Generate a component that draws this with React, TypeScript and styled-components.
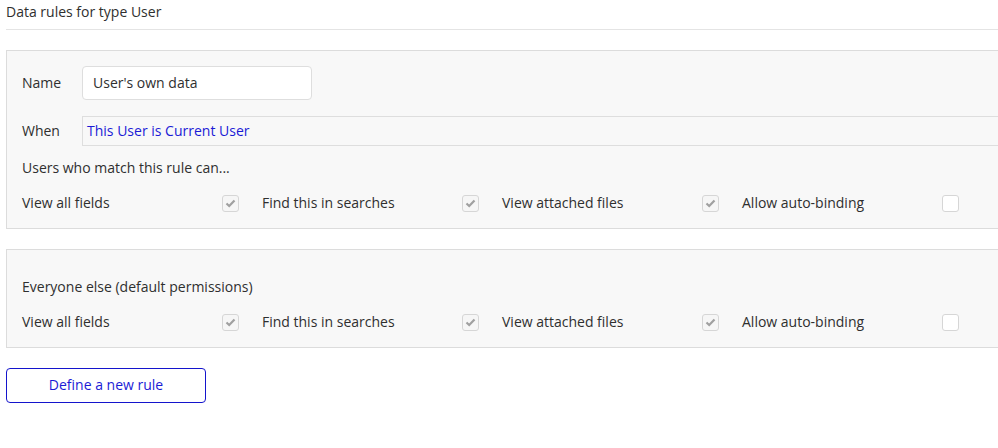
import React from "react";
import styled, { createGlobalStyle } from "styled-components";

const Global = createGlobalStyle`
  html, body { margin: 0; padding: 0; background: #fff; }
  body { font-family: "Open Sans", "Noto Sans", sans-serif; color: #2f2f2f; }
  * { box-sizing: border-box; }
`;

const Page = styled.div`
  padding: 0 0 0 6px;
  width: 998px;
`;

const Title = styled.div`
  font-size: 14px;
  line-height: 20px;
  padding-top: 2px;
  height: 30px;
  border-bottom: 1px solid #e4e4e4;
`;

const Panel = styled.div<{ $top: number }>`
  margin-top: ${(p) => p.$top}px;
  background: #f8f8f8;
  border: 1px solid #dcdcdc;
  border-right: none;
  padding: 0 0 0 15px;
`;

const Row = styled.div<{ $h: number }>`
  display: flex;
  align-items: center;
  height: ${(p) => p.$h}px;
  font-size: 14px;
`;

const TextRow = styled(Row)`
  padding-bottom: 2px;
`;

const Label = styled.div`
  width: 60px;
  flex: none;
  padding-bottom: 2px;
`;

const NameInput = styled.div`
  width: 230px;
  height: 34px;
  background: #fff;
  border: 1px solid #dedede;
  border-radius: 4px;
  padding: 0 0 2px 10px;
  display: flex;
  align-items: center;
  font-size: 14px;
`;

const WhenInput = styled.div`
  flex: 1;
  height: 30px;
  background: #f8f8f8;
  border: 1px solid #dedede;
  border-right: none;
  padding: 0 0 2px 4px;
  display: flex;
  align-items: center;
  color: #1b1bd6;
  font-size: 14px;
`;

const PermGrid = styled.div`
  display: grid;
  grid-template-columns: repeat(4, 240px);
  align-items: center;
`;

const Perm = styled.div`
  display: flex;
  align-items: center;
  font-size: 14px;
`;

const PermLabel = styled.div`
  width: 200px;
  padding-bottom: 2px;
`;

const Box = styled.div<{ $checked: boolean }>`
  width: 17px;
  height: 17px;
  border: 1px solid #d6d6d6;
  border-radius: 3px;
  background: ${(p) => (p.$checked ? "#f6f6f6" : "#fff")};
  display: flex;
  align-items: center;
  justify-content: center;
`;

const Button = styled.button`
  margin-top: 20px;
  width: 200px;
  height: 35px;
  padding: 0 0 2px;
  border: 1px solid #1414cc;
  border-radius: 4px;
  background: #fff;
  color: #1b1bd6;
  font-family: "Open Sans", "Noto Sans", sans-serif;
  font-size: 14px;
  display: block;
`;

const Check = () => (
  <svg width="11" height="9" viewBox="0 0 11 9">
    <path d="M1.5 4.5 L4.2 7 L9.5 1.5" fill="none" stroke="#a0a0a0" strokeWidth="2.2" />
  </svg>
);

const perms = [
  { label: "View all fields", checked: true },
  { label: "Find this in searches", checked: true },
  { label: "View attached files", checked: true },
  { label: "Allow auto-binding", checked: false },
];

const Perms = () => (
  <PermGrid>
    {perms.map((p) => (
      <Perm key={p.label}>
        <PermLabel>{p.label}</PermLabel>
        <Box $checked={p.checked}>{p.checked && <Check />}</Box>
      </Perm>
    ))}
  </PermGrid>
);

export default function App() {
  return (
    <>
      <Global />
      <Page>
        <Title>Data rules for type User</Title>
        <Panel $top={20}>
          <Row $h={15} />
          <Row $h={34}>
            <Label>Name</Label>
            <NameInput>User's own data</NameInput>
          </Row>
          <Row $h={16} />
          <Row $h={30}>
            <Label>When</Label>
            <WhenInput>This User is Current User</WhenInput>
          </Row>
          <TextRow $h={45}>Users who match this rule can...</TextRow>
          <Row $h={25}>
            <Perms />
          </Row>
          <Row $h={12} />
        </Panel>
        <Panel $top={20}>
          <Row $h={23} />
          <TextRow $h={28}>Everyone else (default permissions)</TextRow>
          <Row $h={43}>
            <Perms />
          </Row>
          <Row $h={3} />
        </Panel>
        <Button>Define a new rule</Button>
      </Page>
    </>
  );
}
